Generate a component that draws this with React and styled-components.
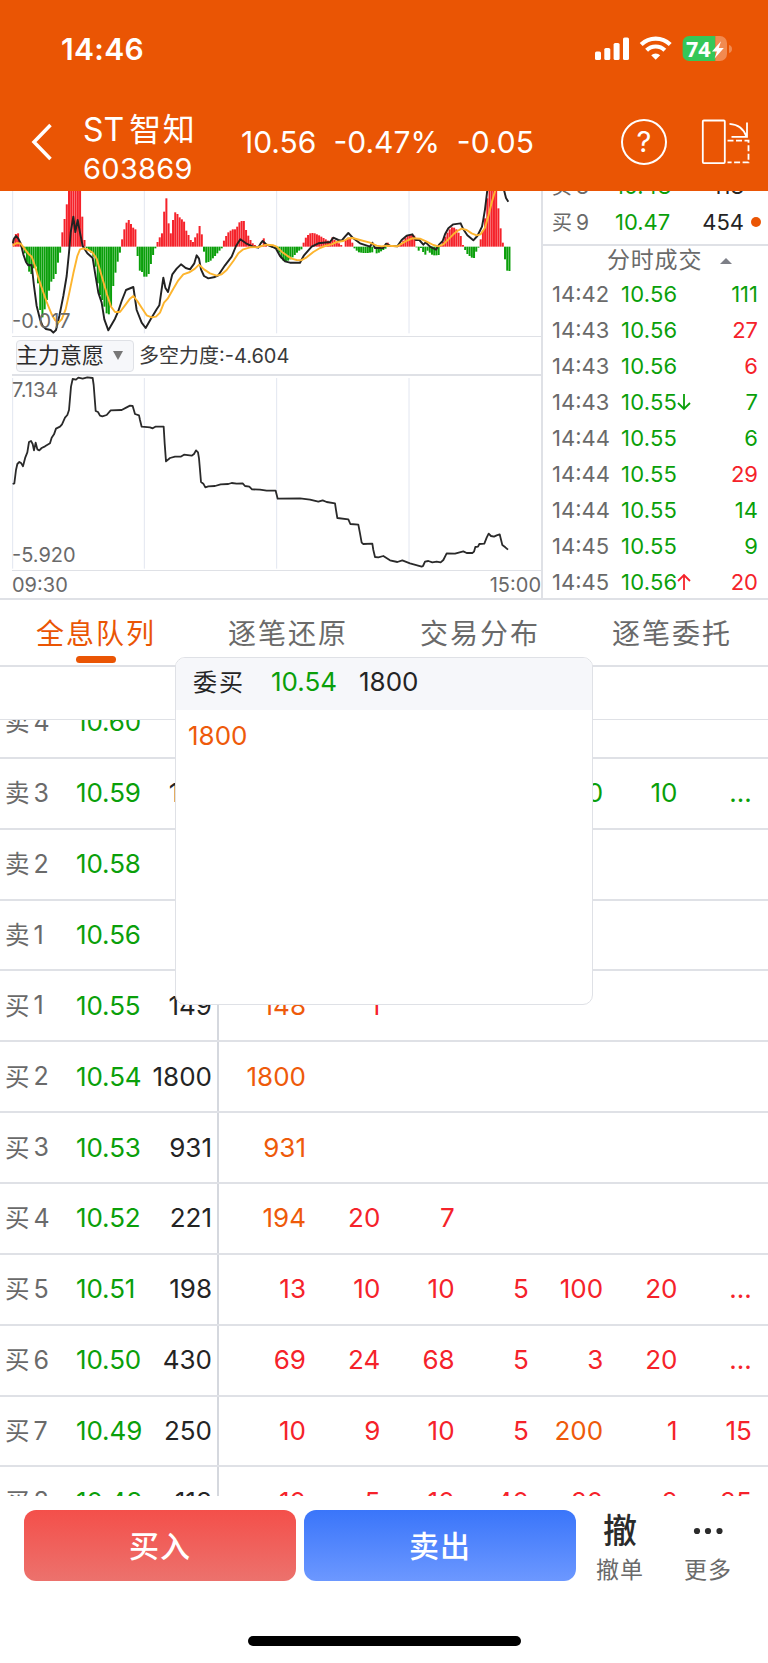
import React, { useState } from "react";
import styled, { createGlobalStyle } from "styled-components";

const colors = {
  brand: "#ea5504",
  up: "#f5222a",
  down: "#0a9f0a",
  big: "#ee5a0a",
  text: "#242424",
  muted: "#6a6a6a",
  line: "#dfe1e6",
};

const tabs = ["全息队列", "逐笔还原", "交易分布", "逐笔委托"];

const depth = [
  { label: "买8", price: "10.48", amount: "118" },
  { label: "买9", price: "10.47", amount: "454", dot: true },
];

const trades = [
  { time: "14:42", price: "10.56", amount: "111", side: "down" },
  { time: "14:43", price: "10.56", amount: "27", side: "up" },
  { time: "14:43", price: "10.56", amount: "6", side: "up" },
  { time: "14:43", price: "10.55", amount: "7", side: "down", arrow: "down" },
  { time: "14:44", price: "10.55", amount: "6", side: "down" },
  { time: "14:44", price: "10.55", amount: "29", side: "up" },
  { time: "14:44", price: "10.55", amount: "14", side: "down" },
  { time: "14:45", price: "10.55", amount: "9", side: "down" },
  { time: "14:45", price: "10.56", amount: "20", side: "up", arrow: "up" },
];

const queue = [
  { label: "卖4", price: "10.60", total: "", tone: "down", orders: [] },
  {
    label: "卖3",
    price: "10.59",
    total: "145",
    tone: "down",
    orders: ["20", "10", "10", "5", "10", "10", "..."],
  },
  { label: "卖2", price: "10.58", total: "", tone: "down", orders: [] },
  { label: "卖1", price: "10.56", total: "", tone: "down", orders: [] },
  { label: "买1", price: "10.55", total: "149", tone: "up", orders: ["148", "1"] },
  { label: "买2", price: "10.54", total: "1800", tone: "up", orders: ["1800"] },
  { label: "买3", price: "10.53", total: "931", tone: "up", orders: ["931"] },
  { label: "买4", price: "10.52", total: "221", tone: "up", orders: ["194", "20", "7"] },
  {
    label: "买5",
    price: "10.51",
    total: "198",
    tone: "up",
    orders: ["13", "10", "10", "5", "100", "20", "..."],
  },
  {
    label: "买6",
    price: "10.50",
    total: "430",
    tone: "up",
    orders: ["69", "24", "68", "5", "3", "20", "..."],
  },
  {
    label: "买7",
    price: "10.49",
    total: "250",
    tone: "up",
    orders: ["10", "9", "10", "5", "200", "1", "15"],
  },
  {
    label: "买8",
    price: "10.48",
    total: "118",
    tone: "up",
    orders: ["10", "5", "10", "40", "20", "2", "25"],
  },
];

// one bar per minute
const macdBars = [
  22, 38, 40, 12, -8, -20, -48, -75, -82, -65, -60, -110, -190, -212, -188, -160,
  -132, -105, -97, -82, -48, -18, 43, 83, 127, 170, 170, 170, 170, 170, 170, 90,
  20, -5, -10, -18, -30, -60, -110, -145, -160, -180, -200, -203, -178, -118, -78,
  -45, -18, 22, 52, 72, 80, 68, 57, 52, -28, -72, -76, -90, -90, -82, -52, -25, -5,
  14, 28, 40, 105, 145, 70, 40, 80, 103, 98, 88, 82, 75, 48, 35, 20, 14, 28, 40,
  62, 37, -15, -48, -46, -42, -35, -28, -20, -12, -5, 18, 32, 43, 48, 52, 52, 60,
  73, 77, 77, 50, 33, 20, 10, 5, 0, 3, 3, 25, 8, 0, 0, -3, -4, -8, -18, -35, -43,
  -44, -42, -38, -32, -25, -18, -12, -8, 12, 27, 35, 40, 41, 40, 37, 34, 30, 26,
  22, 18, 14, 28, 20, 14, 10, 5, 0, 20, 27, 25, 12, -5, -12, -17, -18, -19, -19,
  -19, -18, -17, -2, -20, -18, -14, -10, -6, 12, 5, 2, 2, 2, 5, 10, 18, 26, 32, 35,
  35, 33, -2, -12, -4, -16, -24, -12, -18, -24, -26, -26, -25, 5, 15, 30, 42, 52,
  58, 57, 52, 42, 32, 5, -10, -22, -28, -33, -34, -15, -3, 22, 48, 85, 145, 170,
  170, 170, 170, 115, 55, 12, -38, -72, -73,
];

const difLine =
  "38,172 42,158 48,150 55,158 62,172 70,205 78,228 85,238 95,237 102,300 110,360 120,400 128,420 138,429 152,432 160,440 168,432 178,390 190,330 200,270 207,200 212,140 220,92 226,138 233,102 240,140 248,180 262,202 278,216 285,260 295,320 305,350 313,400 325,433 345,398 355,375 365,345 378,312 400,303 410,372 425,410 437,426 452,400 470,370 478,358 490,275 496,305 504,318 517,265 530,248 543,235 557,246 570,250 583,232 590,208 597,218 603,250 612,270 625,277 645,273 655,268 675,238 695,212 708,180 721,160 738,172 757,181 775,185 782,172 788,165 800,176 818,183 828,188 840,210 855,226 870,230 900,230 912,208 935,182 955,172 990,168 1000,155 1015,162 1025,164 1035,152 1045,141 1060,157 1080,172 1110,182 1117,170 1125,186 1150,186 1158,173 1170,179 1192,181 1205,162 1220,149 1237,145 1247,162 1258,162 1270,176 1277,169 1290,182 1308,191 1318,175 1328,165 1335,145 1345,127 1360,115 1382,112 1390,130 1402,148 1420,163 1432,150 1446,122 1450,100 1455,70 1462,12";
const difTail = "1512,12 1518,36 1525,47";
const deaLine =
  "38,178 50,171 62,173 75,190 85,203 95,212 105,240 115,275 125,305 140,348 155,385 165,402 175,410 185,400 197,370 208,320 220,262 232,210 240,190 252,187 265,192 278,200 290,218 305,270 320,322 333,362 345,378 360,378 375,358 390,338 400,330 412,345 425,365 440,388 455,394 468,392 480,380 492,350 503,338 520,308 535,283 550,265 570,258 585,248 597,236 612,250 630,262 650,269 665,265 680,252 700,225 715,202 730,190 750,184 775,183 800,176 820,178 830,182 845,197 860,208 875,218 890,222 903,223 920,214 940,198 960,186 975,180 995,175 1010,168 1030,165 1045,157 1058,156 1080,162 1110,170 1130,179 1145,181 1160,179 1192,181 1210,170 1225,162 1237,157 1260,158 1280,167 1300,177 1315,181 1330,175 1345,160 1360,145 1372,135 1385,128 1400,132 1415,142 1430,148 1442,145 1455,125 1465,90 1475,50 1486,12";
const forceLine =
  "38,342 43,340 48,300 52,282 58,276 64,280 69,289 76,262 82,247 87,216 93,213 98,222 102,241 107,218 112,238 118,241 125,234 135,229 150,220 155,203 162,193 168,176 180,170 186,163 195,143 202,135 207,120 213,50 218,27 228,29 235,23 248,26 262,22 278,24 281,45 287,123 294,126 300,137 307,139 320,135 332,121 365,120 380,112 390,107 398,108 405,132 417,136 420,150 425,170 450,172 458,175 466,170 491,170 494,220 498,274 510,264 525,260 542,260 552,254 575,257 582,252 588,241 594,247 597,265 600,300 603,336 610,341 616,352 625,349 645,348 662,343 685,342 695,339 710,341 728,340 735,348 748,350 756,358 780,359 800,362 827,362 833,386 900,385 930,389 955,395 968,391 980,396 1005,400 1008,420 1012,444 1045,448 1051,462 1075,464 1080,490 1085,518 1090,522 1117,521 1120,540 1125,561 1135,562 1150,558 1170,571 1192,576 1207,571 1230,580 1265,590 1269,588 1275,575 1285,573 1297,577 1310,575 1322,577 1330,570 1340,550 1365,551 1390,544 1400,549 1417,549 1422,545 1426,531 1434,530 1438,522 1453,521 1460,503 1466,491 1473,498 1482,500 1490,496 1499,493 1507,525 1516,532 1524,539";

const StatusIcons = () => (
  <svg width="140" height="30" viewBox="0 0 140 30" fill="#fff">
    <rect x="0" y="17.6" width="6" height="8.4" rx="1.6" />
    <rect x="9.3" y="14" width="6" height="12" rx="1.6" />
    <rect x="18.6" y="9" width="6" height="17" rx="1.6" />
    <rect x="28" y="3.6" width="6" height="22.4" rx="1.6" />
    <g fill="none" stroke="#fff" strokeWidth="4.2">
      <path d="M46.2 10.6a20.7 20.7 0 0 1 29 0" />
      <path d="M51.6 16.2a13 13 0 0 1 18.2 0" />
    </g>
    <path d="M56.2 21.2a6.5 6.5 0 0 1 9 0l-4.5 4.6z" />
    <clipPath id="battery">
      <rect x="87.4" y="2" width="44.6" height="25" rx="7" />
    </clipPath>
    <g clipPath="url(#battery)">
      <rect x="87.4" y="2" width="33" height="25" fill="#34c759" />
      <rect x="120.4" y="2" width="12" height="25" fill="#f18a50" />
    </g>
    <path d="M134 11v8c2-.6 3-2 3-4s-1-3.4-3-4z" fill="#f18a50" />
    <path d="M126 7.3l-9 10.300h5L119.600 24.500l9.200-10.500h-5z" />
  </svg>
);

const BackIcon = () => (
  <svg width="22" height="38" viewBox="0 0 22 38" fill="none">
    <path d="M19.5 2L3 19l16.500 17" stroke="#fff" strokeWidth="3.5" />
  </svg>
);

const RotateIcon = () => (
  <svg width="50" height="46" viewBox="0 0 50 46" fill="none" stroke="#fff">
    <rect x="1.8" y="1.5" width="22" height="42.6" rx="1" strokeWidth="1.8" />
    <path d="M26.5 21.700h21v21.600h-21" strokeWidth="1.8" strokeDasharray="6 2.5" />
    <path d="M28.5 4.8c8 .5 14 4 17 13M46 3.500v14.300H30.500" strokeWidth="1.8" />
  </svg>
);

const Arrow = ({ dir }) => (
  <svg
    width="14"
    height="18"
    viewBox="0 0 14 18"
    fill="none"
    strokeWidth="1.8"
    stroke={colors[dir]}
  >
    <path d={dir === "down" ? "M7 1v15M1 10l6 6 6-6" : "M7 17V2M1 8l6-6 6 6"} />
  </svg>
);

const Grid = ({ top, bottom }) => (
  <g stroke="#e2e6f0" strokeWidth="3">
    {[38, 433, 830, 1227].map((x) => (
      <line key={x} x1={x} x2={x} y1={top} y2={bottom} />
    ))}
  </g>
);

const MacdChart = () => (
  <ChartSvg viewBox="36 15 1587 435" $h={145}>
    <Grid top={15} bottom={442} />
    {macdBars.map((v, i) => (
      <rect
        key={i}
        x={38 + i * 6.64}
        y={v > 0 ? 182 - v : 182}
        width="6"
        height={Math.abs(v)}
        fill={v > 0 ? colors.up : colors.down}
      />
    ))}
    <g fill="none" strokeWidth="5.8" strokeLinejoin="round">
      <polyline points={difLine} stroke="#222" />
      <polyline points={difTail} stroke="#222" />
      <polyline points={deaLine} stroke="#fdb52e" />
    </g>
  </ChartSvg>
);

const ForceChart = () => (
  <ChartSvg viewBox="36 18 1587 582" $h={194}>
    <Grid top={24} bottom={596} />
    <polyline
      points={forceLine}
      fill="none"
      stroke="#2a2a2a"
      strokeWidth="5.4"
      strokeLinejoin="round"
    />
  </ChartSvg>
);

const App = () => {
  const [active, setActive] = useState(tabs[0]);
  return (
    <Page>
      <GlobalStyle />
      <Header>
        <StatusBar>
          <Clock>14:46</Clock>
          <StatusRight>
            <StatusIcons />
            <BatteryText>74</BatteryText>
          </StatusRight>
        </StatusBar>
        <NavBar>
          <BackIcon />
          <Stock>
            <StockName>
              ST<span>智知</span>
            </StockName>
            <StockCode>603869</StockCode>
          </Stock>
          <Quote>
            <span>10.56</span>
            <span>-0.47%</span>
            <span>-0.05</span>
          </Quote>
          <Help>?</Help>
          <RotateIcon />
        </NavBar>
      </Header>

      <Market>
        <Charts>
          <ChartBox>
            <MacdChart />
            <ChartLabel $bottom={2}>-0.017</ChartLabel>
          </ChartBox>
          <Indicator>
            <Select>
              <span>主力意愿</span>
              <svg width="10" height="9" viewBox="0 0 10 9">
                <path d="M0 0h10L5 9z" fill="#777" />
              </svg>
            </Select>
            <IndicatorValue>多空力度:-4.604</IndicatorValue>
          </Indicator>
          <ChartBox>
            <ForceChart />
            <ChartLabel $top={2}>7.134</ChartLabel>
            <ChartLabel $bottom={2}>-5.920</ChartLabel>
          </ChartBox>
          <TimeAxis>
            <span>09:30</span>
            <span>15:00</span>
          </TimeAxis>
        </Charts>
        <Side>
          <Depth>
            {depth.map((d) => (
              <DepthRow key={d.label}>
                <DepthLabel>
                  {d.label[0]}
                  <span>{d.label[1]}</span>
                </DepthLabel>
                <DepthPrice>{d.price}</DepthPrice>
                <DepthAmount>{d.amount}</DepthAmount>
                <Dot $show={d.dot} />
              </DepthRow>
            ))}
          </Depth>
          <SideTitle>
            <span>分时成交</span>
            <svg width="12" height="6" viewBox="0 0 12 6">
              <path d="M0 6h12L6 0z" fill="#7d7f87" />
            </svg>
          </SideTitle>
          {trades.map((t, i) => (
            <Trade key={i}>
              <TradeTime>{t.time}</TradeTime>
              <TradePrice>{t.price}</TradePrice>
              {t.arrow && <Arrow dir={t.arrow} />}
              <TradeAmount $tone={t.side}>{t.amount}</TradeAmount>
            </Trade>
          ))}
        </Side>
      </Market>

      <Tabs>
        {tabs.map((t) => (
          <Tab key={t} $active={t === active} onClick={() => setActive(t)}>
            {t}
          </Tab>
        ))}
      </Tabs>

      <QueueArea>
        <QueueHead />
        <QueueList>
          {queue.map((row) => (
            <QueueRow key={row.label}>
              <Level>
                <LevelLabel>
                  {row.label[0]}
                  <span>{row.label[1]}</span>
                </LevelLabel>
                <LevelPrice>{row.price}</LevelPrice>
                <LevelTotal>{row.total}</LevelTotal>
              </Level>
              <Orders>
                {row.orders.map((o, i) => (
                  <Order key={i} $tone={Number(o) > 100 ? "big" : row.tone}>
                    {o}
                  </Order>
                ))}
              </Orders>
            </QueueRow>
          ))}
        </QueueList>
        <Popup>
          <PopupHead>
            <PopupTitle>委买</PopupTitle>
            <PopupPrice>10.54</PopupPrice>
            <span>1800</span>
          </PopupHead>
          <PopupBody>1800</PopupBody>
        </Popup>
      </QueueArea>

      <Footer>
        <TradeButton $from="#f44f4a" $to="#ec726d">
          买入
        </TradeButton>
        <TradeButton $from="#3a75fa" $to="#6c98ff">
          卖出
        </TradeButton>
        <Action>
          <ActionGlyph>撤</ActionGlyph>
          撤单
        </Action>
        <Action>
          <ActionGlyph>
            <svg width="30" height="8" viewBox="0 0 30 8" fill="#2b2b2b">
              <circle cx="4" cy="4" r="3.1" />
              <circle cx="15" cy="4" r="3.1" />
              <circle cx="26.5" cy="4" r="3.1" />
            </svg>
          </ActionGlyph>
          更多
        </Action>
      </Footer>
      <HomeBar />
    </Page>
  );
};

export default App;

const GlobalStyle = createGlobalStyle`
  * {
    box-sizing: border-box;
  }
  body {
    margin: 0;
    background: #fff;
    font-family: Inter, "Noto Sans CJK SC", sans-serif;
  }
  button {
    font-family: inherit;
    border: none;
    padding: 0;
    background: none;
  }
  svg {
    display: block;
    flex: none;
  }
`;

const Page = styled.div`
  width: 768px;
  height: 1663px;
  overflow: hidden;
  display: flex;
  flex-direction: column;
  color: ${colors.text};
`;

const Header = styled.header`
  height: 191px;
  flex: none;
  background: ${colors.brand};
  color: #fff;
`;
const StatusBar = styled.div`
  height: 98px;
  display: flex;
  justify-content: space-between;
  padding: 31px 33px 0 61px;
`;
const Clock = styled.div`
  font-size: 30px;
  line-height: 37px;
  font-weight: 600;
  letter-spacing: 0.3px;
`;
const StatusRight = styled.div`
  position: relative;
  padding-top: 3px;
`;
const BatteryText = styled.div`
  position: absolute;
  left: 91px;
  top: 3px;
  font-family: "Open Sans", sans-serif;
  font-size: 21.5px;
  line-height: 29px;
  font-weight: 700;
`;
const NavBar = styled.div`
  height: 93px;
  display: flex;
  align-items: center;
  padding: 0 17px 6px 31px;
`;
const Stock = styled.div`
  width: 158px;
  padding: 17px 0 0 30px;
`;
const StockName = styled.div`
  display: flex;
  gap: 5px;
  font-size: 32px;
  line-height: 38px;
  span {
    letter-spacing: 1.5px;
  }
`;
const StockCode = styled.div`
  font-size: 29px;
  line-height: 40px;
  letter-spacing: 0.3px;
`;
const Quote = styled.div`
  flex: 1;
  display: flex;
  gap: 17px;
  padding-left: 30px;
  font-size: 30px;
`;
const Help = styled.button`
  width: 46px;
  height: 46px;
  margin-right: 34px;
  border: 2px solid #fff;
  border-radius: 50%;
  color: #fff;
  font-size: 29px;
`;

const Market = styled.section`
  height: 409px;
  flex: none;
  display: flex;
  padding-left: 12px;
  border-bottom: 2px solid ${colors.line};
`;
const Charts = styled.div`
  width: 531px;
  border-right: 2px solid ${colors.line};
`;
const ChartBox = styled.div`
  position: relative;
  border-bottom: 1px solid ${colors.line};
`;
const ChartSvg = styled.svg`
  width: 529px;
  height: ${({ $h }) => $h}px;
`;
const ChartLabel = styled.span`
  position: absolute;
  left: 0;
  ${({ $top }) => $top !== undefined && `top: ${$top}px;`}
  ${({ $bottom }) => $bottom !== undefined && `bottom: ${$bottom}px;`}
  font-size: 20px;
  line-height: 25px;
  color: ${colors.muted};
`;
const Indicator = styled.div`
  height: 39px;
  display: flex;
  align-items: center;
  padding-left: 4px;
  border-bottom: 2px solid ${colors.line};
`;
const Select = styled.button`
  width: 118px;
  height: 32px;
  display: flex;
  align-items: center;
  justify-content: space-between;
  padding-right: 10px;
  white-space: nowrap;
  border: 1px solid ${colors.line};
  border-radius: 4px;
  background: #f6f7fa;
  color: #2b2b2b;
  font-size: 22px;
  line-height: 26px;
  span {
    padding-bottom: 1px;
    margin-left: -1px;
  }
`;
const IndicatorValue = styled.span`
  margin-left: 5px;
  padding-top: 1px;
  font-size: 20px;
  line-height: 24px;
  color: #3a3a3a;
`;
const TimeAxis = styled.div`
  display: flex;
  justify-content: space-between;
  font-size: 20px;
  line-height: 29px;
  color: ${colors.muted};
`;

const Side = styled.div`
  flex: 1;
`;
const Depth = styled.div`
  height: 55px;
  display: flex;
  flex-direction: column;
  justify-content: flex-end;
  overflow: hidden;
  padding-bottom: 4px;
  border-bottom: 2px solid ${colors.line};
`;
const DepthRow = styled.div`
  height: 36px;
  flex: none;
  display: flex;
  align-items: center;
  padding: 0 7px 0 9px;
  font-size: 22px;
`;
const DepthLabel = styled.div`
  width: 63px;
  display: flex;
  align-items: center;
  gap: 4px;
  margin-top: -2px;
  color: ${colors.muted};
  font-size: 20px;
  span {
    margin-top: 2px;
    font-size: 21px;
  }
`;
const DepthPrice = styled.div`
  color: ${colors.down};
`;
const DepthAmount = styled.div`
  flex: 1;
  text-align: right;
`;
const Dot = styled.i`
  width: 10px;
  height: 10px;
  margin-left: 7px;
  border-radius: 50%;
  background: ${({ $show }) => ($show ? colors.brand : "transparent")};
`;
const SideTitle = styled.div`
  height: 30px;
  display: flex;
  align-items: center;
  gap: 18px;
  padding-left: 64px;
  color: ${colors.muted};
  font-size: 23px;
  line-height: 26px;
  letter-spacing: 0.8px;
  span {
    padding-bottom: 2px;
  }
`;
const Trade = styled.div`
  height: 36px;
  display: flex;
  align-items: center;
  padding: 0 10px 0 9px;
  font-size: 22px;
`;
const TradeTime = styled.div`
  width: 69px;
  color: ${colors.muted};
`;
const TradePrice = styled.div`
  letter-spacing: 0.2px;
  color: ${colors.down};
`;
const TradeAmount = styled.div`
  margin-left: auto;
  color: ${({ $tone }) => colors[$tone]};
`;

const Tabs = styled.nav`
  height: 67px;
  flex: none;
  display: flex;
  border-bottom: 2px solid ${colors.line};
`;
const Tab = styled.button`
  position: relative;
  flex: 1;
  padding-bottom: 2px;
  font-size: 28px;
  letter-spacing: 2px;
  color: ${({ $active }) => ($active ? colors.brand : colors.muted)};
  &::after {
    content: "";
    display: ${({ $active }) => ($active ? "block" : "none")};
    position: absolute;
    left: 76px;
    bottom: 2.5px;
    width: 40px;
    height: 6.5px;
    border-radius: 3.5px;
    background: ${colors.brand};
  }
`;

const QueueArea = styled.section`
  position: relative;
  height: 829px;
  flex: none;
`;
const QueueHead = styled.div`
  height: 53px;
  border-bottom: 1px solid ${colors.line};
`;
const QueueList = styled.div`
  height: 776px;
  display: flex;
  flex-direction: column;
  overflow: hidden;
`;
const QueueRow = styled.div`
  height: 70.86px;
  flex: none;
  display: flex;
  border-bottom: 2px solid ${colors.line};
  font-size: 26px;
  &:first-child {
    margin-top: -32px;
  }
`;
const Level = styled.div`
  width: 219px;
  display: flex;
  align-items: center;
  padding: 0 5px 1px 5px;
  border-right: 2px solid #d5d8de;
`;
const LevelLabel = styled.div`
  width: 71px;
  display: flex;
  align-items: center;
  gap: 4px;
  margin-top: -2px;
  font-size: 24.5px;
  color: ${colors.muted};
  span {
    margin-top: 2px;
    font-size: 25px;
  }
`;
const LevelPrice = styled.div`
  letter-spacing: -0.1px;
  color: ${colors.down};
`;
const LevelTotal = styled.div`
  flex: 1;
  text-align: right;
`;
const Orders = styled.div`
  display: grid;
  grid-template-columns: 87px repeat(6, 74.3px);
  align-items: center;
  padding-bottom: 1px;
`;
const Order = styled.div`
  text-align: right;
  color: ${({ $tone }) => colors[$tone]};
`;

const Popup = styled.div`
  position: absolute;
  left: 175px;
  top: -10px;
  width: 418px;
  height: 348px;
  overflow: hidden;
  border: 1px solid ${colors.line};
  border-radius: 10px;
  background: #fff;
  font-size: 26px;
`;
const PopupHead = styled.div`
  height: 52px;
  display: flex;
  align-items: center;
  padding: 0 0 5px 17px;
  background: #f6f7fa;
`;
const PopupTitle = styled.div`
  width: 78px;
  margin-top: -2px;
  font-size: 24px;
  letter-spacing: 2px;
`;
const PopupPrice = styled.div`
  width: 88px;
  color: ${colors.down};
`;
const PopupBody = styled.div`
  padding: 10px 12px;
  color: ${colors.big};
`;

const Footer = styled.footer`
  height: 140px;
  flex: none;
  display: flex;
  align-items: flex-start;
  padding: 14px 0 0 24px;
`;
const TradeButton = styled.button`
  width: 272px;
  height: 71px;
  flex: none;
  margin-right: 8px;
  padding-bottom: 4px;
  border-radius: 12px;
  background: linear-gradient(${({ $from }) => $from}, ${({ $to }) => $to});
  color: #fff;
  font-size: 30px;
  font-weight: 500;
  letter-spacing: 1px;
`;
const Action = styled.div`
  width: 72px;
  flex: none;
  margin-right: 16px;
  text-align: center;
  font-size: 23px;
  line-height: 36px;
  letter-spacing: 1px;
  color: ${colors.muted};
`;
const ActionGlyph = styled.div`
  height: 42px;
  display: flex;
  align-items: center;
  justify-content: center;
  font-size: 34px;
  font-weight: 500;
  letter-spacing: 0;
  color: #2b2b2b;
`;
const HomeBar = styled.div`
  width: 273px;
  height: 10px;
  margin-left: 248px;
  border-radius: 5px;
  background: #000;
`;
